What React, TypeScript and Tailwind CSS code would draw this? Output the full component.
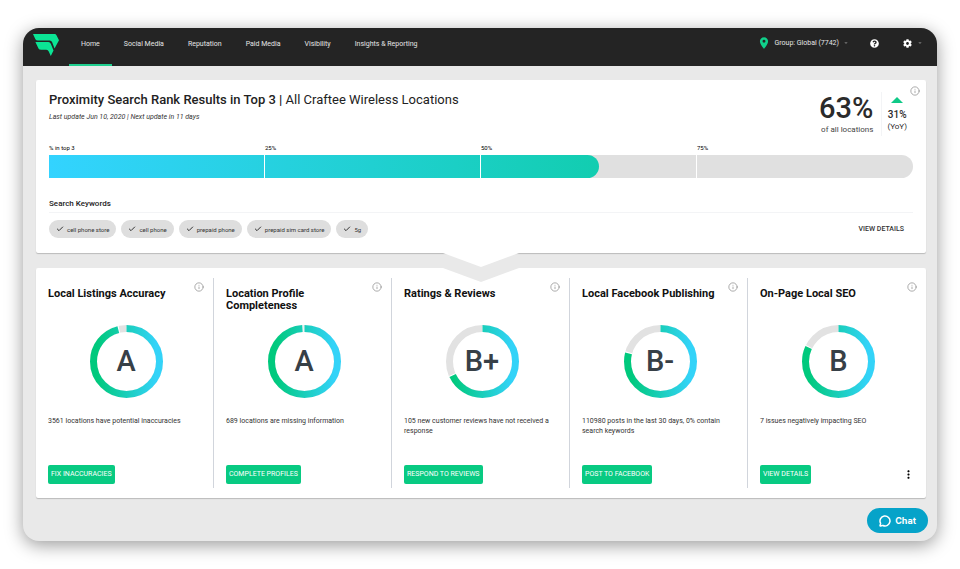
import { useState } from "react";
import { Check, Info, MessageCircle } from "lucide-react";
import { FaCog, FaQuestionCircle } from "react-icons/fa";
import { MdArrowDropDown, MdLocationOn, MdMoreVert } from "react-icons/md";

const navItems = ["Home", "Social Media", "Reputation", "Paid Media", "Visibility", "Insights & Reporting"];

const keywords = ["cell phone store", "cell phone", "prepaid phone", "prepaid sim card store", "5g"];

const ticks = ["% in top 3", "25%", "50%", "75%"];

const scores = [
  { title: "Local Listings Accuracy", grade: "A", percent: 96, text: "3561 locations have potential inaccuracies", action: "FIX INACCURACIES" },
  { title: "Location Profile Completeness", grade: "A", percent: 99, text: "689 locations are missing information", action: "COMPLETE PROFILES" },
  { title: "Ratings & Reviews", grade: "B+", percent: 68, text: "105 new customer reviews have not received a response", action: "RESPOND TO REVIEWS" },
  { title: "Local Facebook Publishing", grade: "B-", percent: 79, text: "110980 posts in the last 30 days, 0% contain search keywords", action: "POST TO FACEBOOK" },
  { title: "On-Page Local SEO", grade: "B", percent: 82, text: "7 issues negatively impacting SEO", action: "VIEW DETAILS", menu: true },
];

function Logo() {
  return (
    <svg viewBox="0 0 76 64" className="h-[22px] w-[26px]" fill="#0be595">
      <path d="M0 0H63Q67 0 69 4L76 18L63 42L56 24Q54 19 49 19H14Q9 19 7 15Z" />
      <path d="M7 23H45Q50 23 52 28L60 48L52 64L46 51Q44 46 39 46H24Q18 46 16 42Z" />
    </svg>
  );
}

function InfoButton({ label }: { label: string }) {
  return (
    <button type="button" aria-label={label} className="shrink-0 text-[#8a8a8a]">
      <Info size={10} strokeWidth={1.7} />
    </button>
  );
}

function Header({ active, onSelect }: { active: string; onSelect: (item: string) => void }) {
  return (
    <header className="flex h-[38px] items-stretch bg-[#242424] pl-[10px] pr-[13px] text-[7px] text-[#e4e4e4]">
      <a href="#" aria-label="Dashboard" className="mr-[10px] pt-[6px]">
        <Logo />
      </a>
      <nav className="flex">
        {navItems.map((item) => (
          <a
            key={item}
            href="#"
            onClick={() => onSelect(item)}
            className={
              item === active
                ? "border-b-2 border-[#1fcf8f] px-3 pt-[11px] leading-[10px]"
                : "border-b-2 border-transparent px-3 pt-[11px] leading-[10px]"
            }
          >
            {item}
          </a>
        ))}
      </nav>
      <div className="ml-auto flex items-center pb-2">
        <MdLocationOn size={14} className="mr-1 text-[#10d08a]" />
        <button type="button" className="flex items-center gap-[3px]">
          Group: Global (7742)
          <MdArrowDropDown size={8} className="text-[#777]" />
        </button>
        <button type="button" aria-label="Help" className="ml-5 text-white">
          <FaQuestionCircle size={9} />
        </button>
        <button type="button" aria-label="Settings" className="ml-6 flex items-center gap-1 text-white">
          <FaCog size={9} />
          <MdArrowDropDown size={8} className="text-[#777]" />
        </button>
      </div>
    </header>
  );
}

function RankBar({ percent }: { percent: number }) {
  return (
    <div className="mt-[7px]">
      <div className="grid grid-cols-4 text-[6px] leading-[10px] text-black">
        {ticks.map((tick) => (
          <span key={tick}>{tick}</span>
        ))}
      </div>
      <div className="relative mt-[2px] h-[23px] overflow-hidden rounded-l-xs rounded-r-full bg-[#e0e0e0]">
        <div
          className="h-full rounded-r-full bg-linear-to-r from-[#33d3ff] to-[#12cdb0]"
          style={{ width: `${percent}%` }}
        />
        <div className="absolute inset-0 grid grid-cols-4">
          <span className="border-r border-white" />
          <span className="border-r border-white" />
          <span className="border-r border-white" />
        </div>
      </div>
    </div>
  );
}

function RankCard() {
  return (
    <section className="relative ml-[13px] mr-[11px] mt-[14px] rounded-xs bg-white pb-[15px] pl-[13px] pr-[13px] pt-2 shadow-[0_1px_1px_rgba(0,0,0,0.2)]">
      <div className="flex items-start">
        <div className="pt-1">
          <h1 className="text-[13px] leading-4 font-medium text-[#222]">
            Proximity Search Rank Results in Top 3 | <span className="font-normal">All Craftee Wireless Locations</span>
          </h1>
          <p className="mt-1 text-[7px] leading-[10px] text-[#333] italic">Last update Jun 10, 2020 | Next update in 11 days</p>
        </div>
        <div className="ml-auto flex pt-1 pr-[3px] text-[#2b2b2b]">
          <div className="pr-2 text-right">
            <div className="text-[29px] leading-8 font-medium">63%</div>
            <div className="text-[8px] leading-3 text-[#444]">of all locations</div>
          </div>
          <div className="flex flex-col items-center border-l border-gray-100 pl-[5px] pt-[5px]">
            <svg viewBox="0 0 12 6" className="h-[6px] w-3" fill="#0fc987">
              <path d="M6 0L12 6H0Z" />
            </svg>
            <div className="mt-[6px] text-[10px] leading-3 font-medium">31%</div>
            <div className="text-[8px] leading-3">(YoY)</div>
          </div>
        </div>
        <div className="-mt-[2px] -mr-[7px] flex">
          <InfoButton label="About rank results" />
        </div>
      </div>

      <RankBar percent={63.7} />

      <h2 className="mt-[21px] border-b border-gray-100 pb-[3px] text-[8px] leading-[10px] font-medium text-[#222]">Search Keywords</h2>
      <div className="mt-[7px] flex items-center gap-[5px] text-[#333]">
        {keywords.map((keyword) => (
          <span key={keyword} className="flex h-[18px] items-center gap-[3px] rounded-full bg-[#dedede] px-[7px] text-[6px]">
            <Check size={8} strokeWidth={3} />
            {keyword}
          </span>
        ))}
        <button type="button" className="ml-auto mr-[9px] text-[7px] font-medium">
          VIEW DETAILS
        </button>
      </div>

      <svg viewBox="0 0 76 30" className="absolute top-full left-1/2 z-10 h-[30px] w-[76px] -translate-x-1/2">
        <path d="M0 15L38 29L76 15V14H0Z" fill="#e9e9e9" />
        <path d="M0 0L38 14L76 0Z" fill="#fff" />
      </svg>
    </section>
  );
}

function GradeRing({ grade, percent }: { grade: string; percent: number }) {
  return (
    <div className="mx-auto grid h-[73px] w-[73px] place-items-center">
      <svg viewBox="0 0 73 73" className="col-start-1 row-start-1 h-full w-full -rotate-90" fill="none" strokeWidth="7">
        <defs>
          <linearGradient id="ring" x1="0" y1="0" x2="0" y2="73" gradientUnits="userSpaceOnUse">
            <stop offset="0.1" stopColor="#00c97d" />
            <stop offset="0.9" stopColor="#33d3f8" />
          </linearGradient>
        </defs>
        <circle cx="36.5" cy="36.5" r="33" stroke="#e2e2e2" />
        <circle cx="36.5" cy="36.5" r="33" stroke="#fff" pathLength="100" strokeDasharray={`${percent + 0.5} 100`} />
        <circle cx="36.5" cy="36.5" r="33" stroke="url(#ring)" pathLength="100" strokeDasharray={`${percent} 100`} />
      </svg>
      <span className="col-start-1 row-start-1 text-[29px] leading-none font-medium text-[#374047]">{grade}</span>
    </div>
  );
}

function ScoreCards() {
  return (
    <section className="ml-[13px] mr-[11px] mt-[15px] grid grid-cols-5 rounded-xs bg-white py-[10px] shadow-[0_1px_1px_rgba(0,0,0,0.2)]">
      {scores.map((score) => (
        <article key={score.title} className="flex min-h-[210px] flex-col border-r border-gray-300 pl-3 pr-[9px] last:border-r-0">
          <div className="flex h-[47px] items-start justify-between pt-1">
            <h2 className="pt-[6px] text-[11px] leading-3 font-bold text-[#111]">{score.title}</h2>
            <InfoButton label={`About ${score.title}`} />
          </div>
          <GradeRing grade={score.grade} percent={score.percent} />
          <p className="mt-[18px] text-[7px] leading-[10px] text-[#333]">{score.text}</p>
          <div className="mt-auto mb-1 flex items-center justify-between">
            <button type="button" className="h-[19px] rounded-xs bg-[#08ca82] px-[3px] text-[7px] text-white">
              {score.action}
            </button>
            {score.menu && (
              <button type="button" aria-label="More options" className="mr-0.5 text-black">
                <MdMoreVert size={13} />
              </button>
            )}
          </div>
        </article>
      ))}
    </section>
  );
}

export default function App() {
  const [active, setActive] = useState("Home");

  return (
    <div className="flow-root bg-white font-['Roboto',sans-serif]">
      <div className="mx-[23px] my-7 overflow-hidden rounded-2xl bg-[#e9e9e9] shadow-[0_4px_18px_rgba(0,0,0,0.4)]">
        <Header active={active} onSelect={setActive} />
        <main>
          <RankCard />
          <ScoreCards />
        </main>
        <footer className="flex justify-end pt-[10px] pr-[9px] pb-2">
          <button type="button" className="flex h-[25px] items-center gap-1 rounded-full bg-[#06a3c9] px-3 font-['Inter',sans-serif] text-[9px] font-bold text-white">
            <MessageCircle size={12} strokeWidth={3} />
            Chat
          </button>
        </footer>
      </div>
    </div>
  );
}
